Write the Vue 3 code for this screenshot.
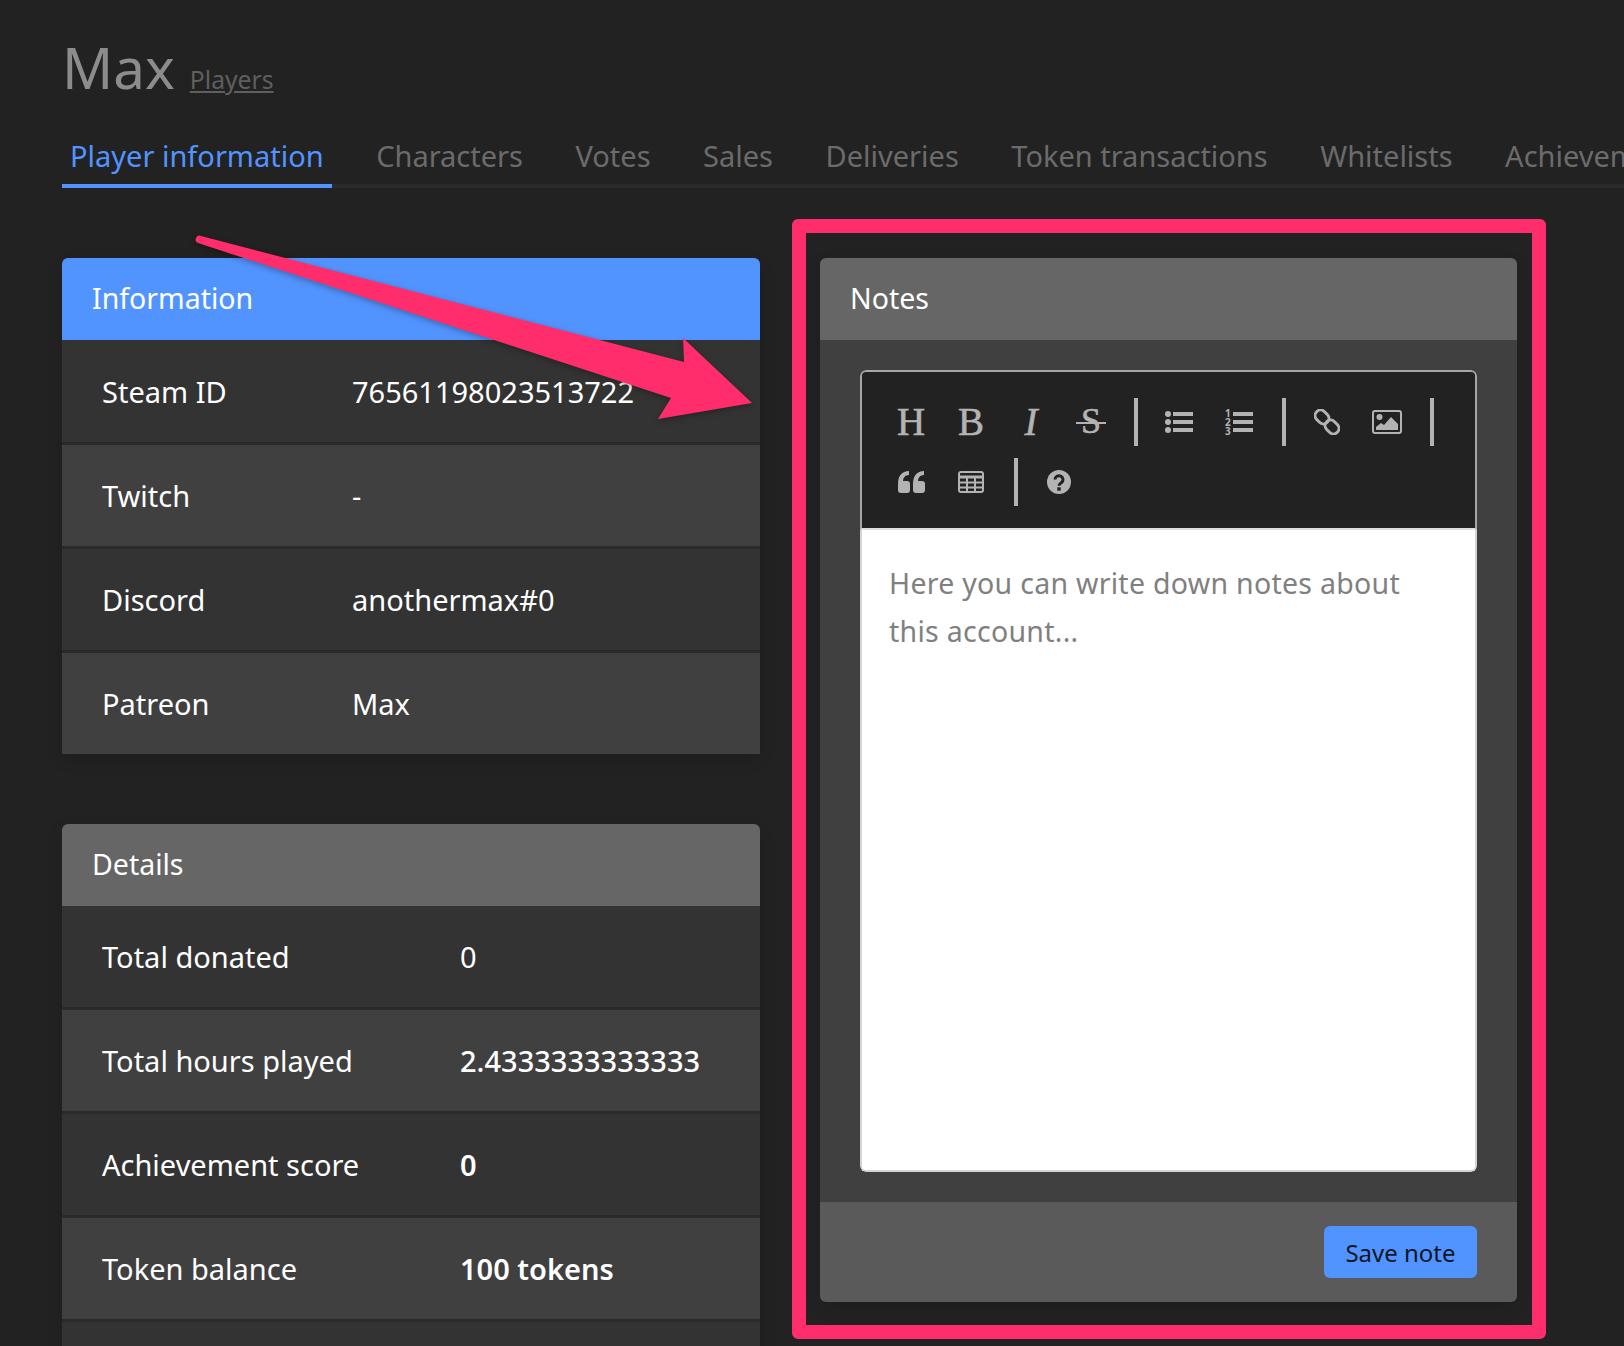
<template>
  <div class="page">
    <header class="title-row">
      <h1>Max</h1>
      <a class="crumb" href="#">Players</a>
    </header>

    <nav class="tabs">
      <a v-for="(tab, i) in tabs" :key="tab" class="tab" :class="{ active: i === 0 }">{{ tab }}</a>
    </nav>

    <div class="columns">
      <div class="left">
        <section class="card">
          <h2 class="card-head blue">Information</h2>
          <div v-for="row in infoRows" :key="row[0]" class="row info">
            <span>{{ row[0] }}</span>
            <span>{{ row[1] }}</span>
          </div>
        </section>

        <section class="card">
          <h2 class="card-head">Details</h2>
          <div v-for="row in detailRows" :key="row[0]" class="row details">
            <span>{{ row[0] }}</span>
            <span :class="row[2]">{{ row[1] }}</span>
          </div>
        </section>
      </div>

      <div class="right">
        <section class="card notes">
          <h2 class="card-head">Notes</h2>
          <div class="notes-body">
            <div class="editor">
              <div class="toolbar">
                <button class="tool glyph">H</button>
                <button class="tool glyph">B</button>
                <button class="tool glyph slanted">I</button>
                <button class="tool glyph strike"><span>S</span></button>
                <i class="sep"></i>
                <button class="tool">
                  <svg width="28" height="22" viewBox="0 0 28 22" fill="currentColor">
                    <circle cx="3" cy="3" r="3" /><circle cx="3" cy="11" r="3" /><circle cx="3" cy="19" r="3" />
                    <rect x="8" y="1" width="20" height="4" /><rect x="8" y="9" width="20" height="4" /><rect x="8" y="17" width="20" height="4" />
                  </svg>
                </button>
                <button class="tool">
                  <svg width="28" height="28" viewBox="0 0 28 28" fill="currentColor">
                    <text x="0" y="9" class="num">1</text><text x="0" y="18" class="num">2</text><text x="0" y="27" class="num">3</text>
                    <rect x="8" y="4" width="20" height="4" /><rect x="8" y="12" width="20" height="4" /><rect x="8" y="20" width="20" height="4" />
                  </svg>
                </button>
                <i class="sep"></i>
                <button class="tool">
                  <svg width="26" height="26" viewBox="0 0 26 26" fill="none" stroke="currentColor" stroke-width="3">
                    <rect x="0.500" y="2.500" width="15" height="11" rx="5.500" transform="rotate(45 8 8)" />
                    <rect x="10.500" y="12.500" width="15" height="11" rx="5.500" transform="rotate(45 18 18)" />
                  </svg>
                </button>
                <button class="tool">
                  <svg width="30" height="24" viewBox="0 0 30 24">
                    <rect x="1" y="1" width="28" height="22" rx="2" fill="none" stroke="currentColor" stroke-width="2" />
                    <circle cx="7.500" cy="7" r="3" fill="currentColor" />
                    <path d="M4 20v-3l5-4 3 2 7-8 7 7v6z" fill="currentColor" />
                  </svg>
                </button>
                <i class="sep"></i>
                <button class="tool">
                  <svg width="27" height="22" viewBox="0 0 27 22" fill="currentColor">
                    <path d="M0 13C0 5 4 0 11 0v4C7 4 5 7 5 10h4a3 3 0 0 1 3 3v6a3 3 0 0 1-3 3H3a3 3 0 0 1-3-3z" />
                    <path d="M15 13C15 5 19 0 26 0v4c-4 0-6 3-6 6h4a3 3 0 0 1 3 3v6a3 3 0 0 1-3 3h-6a3 3 0 0 1-3-3z" />
                  </svg>
                </button>
                <button class="tool">
                  <svg width="26" height="22" viewBox="0 0 26 22" fill="none" stroke="currentColor" stroke-width="2">
                    <rect x="1" y="1" width="24" height="20" rx="2" />
                    <path d="M1 6h24" stroke-width="3" />
                    <path d="M1 11.500h24M1 16.500h24M9 6v15M17 6v15" />
                  </svg>
                </button>
                <i class="sep"></i>
                <button class="tool">
                  <svg width="24" height="24" viewBox="0 0 24 24">
                    <circle cx="12" cy="12" r="12" fill="currentColor" />
                    <path d="M8 9.500a4 3.800 0 1 1 6.500 3c-1.600 1.200-2.500 1.700-2.500 3.200" fill="none" stroke="#222" stroke-width="3" />
                    <rect x="10.300" y="17.300" width="3.400" height="3.400" fill="#222" />
                  </svg>
                </button>
              </div>
              <div class="editor-text">Here you can write down notes about this account...</div>
            </div>
          </div>
          <footer class="notes-foot">
            <button class="save">Save note</button>
          </footer>
        </section>
        <!-- annotation frame drawn over the screenshot -->
        <div class="frame"></div>
      </div>
    </div>

    <!-- annotation arrow -->
    <svg class="arrow" width="800" height="440" viewBox="0 0 800 440">
      <path d="M201 236 684 362 683 338 752 403 658 419 671 398 198 243a3.600 3.600 0 0 1 3-7z" />
    </svg>
  </div>
</template>

<script setup>
const tabs = ['Player information', 'Characters', 'Votes', 'Sales', 'Deliveries', 'Token transactions', 'Whitelists', 'Achievements']

const infoRows = [
  ['Steam ID', '76561198023513722'],
  ['Twitch', '-'],
  ['Discord', 'anothermax#0'],
  ['Patreon', 'Max']
]

const detailRows = [
  ['Total donated', '0', ''],
  ['Total hours played', '2.4333333333333', 'medium'],
  ['Achievement score', '0', 'strong'],
  ['Token balance', '100 tokens', 'strong'],
  ['', '', '']
]
</script>

<style>
html, body {
  background: #222;
}
</style>

<style scoped>
.page {
  position: relative;
  width: 1624px;
  height: 1346px;
  overflow: hidden;
  background: #222;
  font-family: "Noto Sans", "Open Sans", sans-serif;
  color: #fff;
}

.title-row {
  display: flex;
  align-items: baseline;
  gap: 15px;
  padding: 28px 62px 0 62px;
  height: 101px;
  box-sizing: border-box;
}

.title-row h1 {
  margin: 0;
  font-size: 56.500px;
  line-height: 80px;
  font-weight: 400;
  color: #8c8c8c;
}

.crumb {
  font-size: 24.700px;
  color: #5f5f5f;
  text-decoration: underline;
}

.tabs {
  display: flex;
  gap: 36.500px;
  margin-left: 62px;
  height: 87px;
  padding-top: 34px;
  box-sizing: border-box;
  white-space: nowrap;
  border-bottom: 4px solid #2b2b2b;
  width: 1700px;
}

.tab {
  flex: none;
  box-sizing: border-box;
  height: 53px;
  padding: 0 8px;
  font-size: 29px;
  line-height: 42px;
  color: #6b6b6b;
}

.tab.active {
  color: #5294ff;
  border-bottom: 4px solid #5294ff;
}

.columns {
  display: grid;
  grid-template-columns: 698px 697px;
  gap: 60px;
  padding: 70px 0 0 62px;
}

.left {
  display: flex;
  flex-direction: column;
  gap: 70px;
}

.right {
  position: relative;
  height: 1044px;
}

.card {
  border-radius: 6px 6px 0 0;
  box-shadow: 0 6px 16px rgba(0, 0, 0, 0.12);
  overflow: hidden;
}

.card-head {
  margin: 0;
  height: 82px;
  padding: 0 30px;
  font-size: 28.500px;
  font-weight: 400;
  line-height: 80px;
  background: #666;
}

.card-head.blue {
  background: #5294ff;
}

.row {
  display: grid;
  align-items: center;
  height: 101px;
  padding-left: 40px;
  font-size: 29px;
  background: #333;
  border-bottom: 3px solid #2a2a2a;
}

.row:nth-of-type(even) {
  background: #404040;
}

.row:first-of-type.info {
  height: 102px;
}

.row:last-child {
  border-bottom: 0;
}

.row.info {
  grid-template-columns: 250px 1fr;
}

.row.details {
  grid-template-columns: 358px 1fr;
}

.medium {
  font-weight: 500;
}

.strong {
  font-weight: 600;
}

.notes {
  height: 1044px;
  display: flex;
  flex-direction: column;
  border-radius: 6px;
}

.notes-body {
  flex: 1;
  display: flex;
  padding: 30px 40px;
  background: #404040;
}

.editor {
  flex: 1;
  display: flex;
  flex-direction: column;
  border-radius: 6px;
  overflow: hidden;
}

.toolbar {
  display: flex;
  flex-wrap: wrap;
  align-items: center;
  align-content: flex-start;
  height: 160px;
  box-sizing: border-box;
  padding: 20px 0 0 19px;
  background: #222;
  border: 2px solid #a6a6a6;
  border-bottom: 2px solid #dedede;
  border-radius: 6px 6px 0 0;
  color: #b3b3b3;
}

.tool {
  flex: none;
  display: flex;
  align-items: center;
  justify-content: center;
  width: 60px;
  height: 60px;
  padding: 0;
  border: 0;
  background: none;
  color: inherit;
}

.glyph {
  padding-bottom: 2px;
  font-family: "Liberation Serif", serif;
  font-size: 39px;
  -webkit-text-stroke: 0.6px currentColor;
}

.slanted {
  font-style: italic;
}

.strike span {
  position: relative;
  font-size: 36px;
}

.strike span::after {
  content: "";
  position: absolute;
  left: -5px;
  right: -5px;
  top: 22px;
  height: 2px;
  background: currentColor;
}

.num {
  font-family: "Noto Sans", sans-serif;
  font-size: 10px;
  font-weight: 700;
}

.sep {
  flex: none;
  width: 4px;
  height: 48px;
  margin: 0 11px 0 13px;
  background: #b3b3b3;
}

.editor-text {
  flex: 1;
  padding: 29px 27px;
  background: #fff;
  border: 2px solid #d4d4d4;
  border-top: 0;
  border-radius: 0 0 6px 6px;
  font-size: 28.500px;
  line-height: 48px;
  letter-spacing: 0.28px;
  color: #808080;
}

.notes-foot {
  display: flex;
  justify-content: flex-end;
  height: 100px;
  box-sizing: border-box;
  padding: 24px 40px;
  background: #5a5a5a;
}

.save {
  height: 52px;
  width: 153px;
  border: 0;
  border-radius: 6px;
  background: #5294ff;
  font-family: inherit;
  font-size: 24px;
  color: #0d1626;
}

.frame {
  position: absolute;
  top: -39px;
  left: -28px;
  right: -29px;
  bottom: -37px;
  border: 14px solid #ff2d6b;
  border-radius: 6px;
}

.arrow {
  position: absolute;
  top: 0;
  left: 0;
  fill: #ff2d6b;
  filter: drop-shadow(0 2px 3px rgba(0, 0, 0, 0.3));
}
</style>
